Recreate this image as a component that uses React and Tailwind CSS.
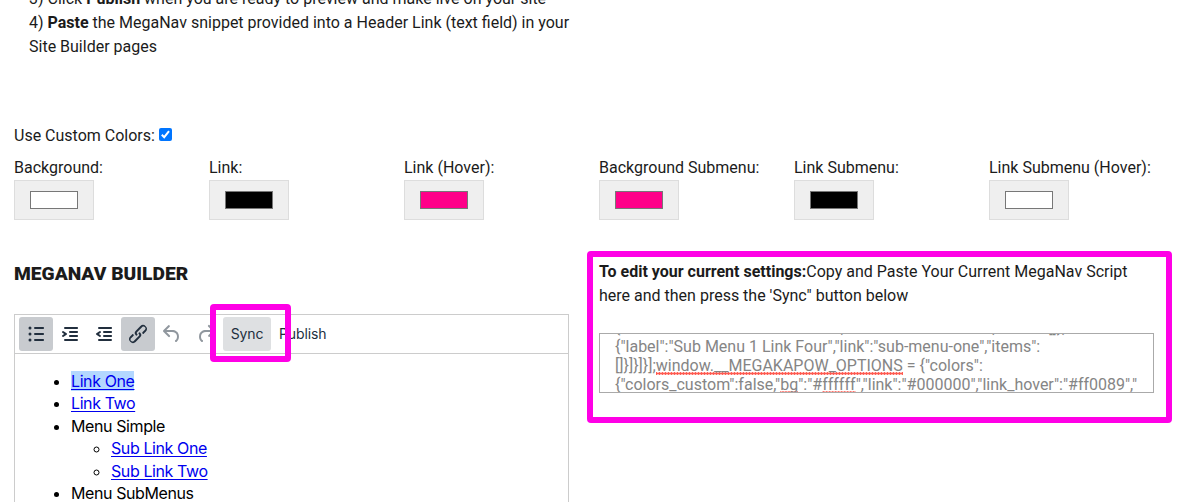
const swatches = [
  { label: 'Background:', fill: 'bg-white' },
  { label: 'Link:', fill: 'bg-black' },
  { label: 'Link (Hover):', fill: 'bg-[#ff0089]' },
  { label: 'Background Submenu:', fill: 'bg-[#ff0089]' },
  { label: 'Link Submenu:', fill: 'bg-black' },
  { label: 'Link Submenu (Hover):', fill: 'bg-white' },
];

const icons = {
  list: 'M11 5h8c.6 0 1 .4 1 1s-.4 1-1 1h-8a1 1 0 0 1 0-2Zm0 6h8c.6 0 1 .4 1 1s-.4 1-1 1h-8a1 1 0 0 1 0-2Zm0 6h8c.6 0 1 .4 1 1s-.4 1-1 1h-8a1 1 0 0 1 0-2ZM6 4.5a1.5 1.5 0 1 1 0 3 1.5 1.5 0 0 1 0-3Zm0 6a1.5 1.5 0 1 1 0 3 1.5 1.5 0 0 1 0-3Zm0 6a1.5 1.5 0 1 1 0 3 1.5 1.5 0 0 1 0-3Z',
  indent: 'M7 5h12c.6 0 1 .4 1 1s-.4 1-1 1H7a1 1 0 1 1 0-2Zm5 4h7c.6 0 1 .4 1 1s-.4 1-1 1h-7a1 1 0 0 1 0-2Zm0 4h7c.6 0 1 .4 1 1s-.4 1-1 1h-7a1 1 0 0 1 0-2Zm-5 4h12a1 1 0 0 1 0 2H7a1 1 0 0 1 0-2Zm-2.6-3.8L6.2 12l-1.8-1.2a1 1 0 0 1 1.2-1.6l3 2a1 1 0 0 1 0 1.6l-3 2a1 1 0 1 1-1.2-1.6Z',
  outdent: 'M7 5h12c.6 0 1 .4 1 1s-.4 1-1 1H7a1 1 0 1 1 0-2Zm5 4h7c.6 0 1 .4 1 1s-.4 1-1 1h-7a1 1 0 0 1 0-2Zm0 4h7c.6 0 1 .4 1 1s-.4 1-1 1h-7a1 1 0 0 1 0-2Zm-5 4h12a1 1 0 0 1 0 2H7a1 1 0 0 1 0-2Zm1.6-3.8a1 1 0 0 1-1.2 1.6l-3-2a1 1 0 0 1 0-1.6l3-2a1 1 0 0 1 1.2 1.6L6.8 12l1.8 1.2Z',
  link: 'M6.2 12.3a1 1 0 0 1 1.4 1.4l-2 2a2 2 0 1 0 2.6 2.8l4.8-4.8a1 1 0 0 0 0-1.4 1 1 0 1 1 1.4-1.3 2.9 2.9 0 0 1 0 4L9.6 20a3.9 3.9 0 0 1-5.5-5.5l2-2Zm11.6-.6a1 1 0 0 1-1.4-1.4l2-2a2 2 0 1 0-2.6-2.8L11 10.3a1 1 0 0 0 0 1.4A1 1 0 1 1 9.6 13a2.9 2.9 0 0 1 0-4L14.4 4a3.9 3.9 0 0 1 5.5 5.5l-2 2Z',
  undo: 'M6.4 8H12c3.7 0 6.2 2 6.8 5.1.6 2.7-.4 5.6-2.3 6.8a1 1 0 0 1-1-1.8c1.1-.6 1.8-2.7 1.4-4.6-.5-2.1-2.1-3.5-4.9-3.5H6.4l3.3 3.3a1 1 0 1 1-1.4 1.4l-5-5a1 1 0 0 1 0-1.4l5-5a1 1 0 0 1 1.4 1.4L6.4 8Z',
  redo: 'M17.6 10H12c-2.8 0-4.4 1.4-4.9 3.5-.4 2 .3 4 1.4 4.6a1 1 0 1 1-1 1.8c-2-1.2-2.9-4.1-2.3-6.8.6-3 3-5.1 6.8-5.1h5.6l-3.3-3.3a1 1 0 1 1 1.4-1.4l5 5a1 1 0 0 1 0 1.4l-5 5a1 1 0 0 1-1.4-1.4l3.3-3.3Z',
};

function ToolButton({ name, active, disabled }) {
  return (
    <button
      aria-label={name}
      className={`flex size-[34px] items-center justify-center rounded-[3px] ${active ? 'bg-[#c8cbcf]' : ''} ${disabled ? 'text-[#222f3e]/50' : 'text-[#222f3e]'}`}
    >
      <svg width="24" height="24" viewBox="0 0 24 24" fill="currentColor">
        <path fillRule="evenodd" d={icons[name]} />
      </svg>
    </button>
  );
}

function Misspelled({ children }) {
  return (
    <span className="bg-[radial-gradient(circle,#ff5a50_1.1px,transparent_1.6px)] bg-[length:3px_3px] bg-bottom bg-repeat-x">
      {children}
    </span>
  );
}

function EditorLink({ children, selected }) {
  return (
    <a className={`text-[#0000ee] underline decoration-1 underline-offset-2 ${selected ? 'bg-[#b3d7ff]' : ''}`}>{children}</a>
  );
}

export default function App() {
  return (
    <main className="h-[502px] overflow-hidden bg-white px-[14px] font-['Roboto',sans-serif] text-base leading-6 text-[#1b1b1b]">
      <div className="-mt-[13px] pl-[15px] whitespace-nowrap">
        <p>3) Click <b>Publish</b> when you are ready to preview and make live on your site</p>
        <p>4) <b>Paste</b> the MegaNav snippet provided into a Header Link (text field) in your</p>
        <p>Site Builder pages</p>
      </div>

      <label className="mt-[65px] flex items-center">
        Use Custom Colors:
        <span className="mb-[3px] ml-1 flex size-[13px] items-center justify-center rounded-[2px] bg-[#0075ff]">
          <svg width="13" height="13" viewBox="0 0 13 13" fill="none" stroke="white" strokeWidth="2">
            <path d="M2.8 6.8 5.2 9.2 10 3.2" />
          </svg>
        </span>
      </label>

      <div className="mt-2 grid w-[1170px] grid-cols-6 whitespace-nowrap">
        {swatches.map(({ label, fill }) => (
          <div key={label}>
            <div>{label}</div>
            <div className="flex h-10 w-20 items-center justify-center border border-[#ddd] bg-[#efefef]">
              <div className={`h-[18px] w-12 border border-[#777] ${fill}`} />
            </div>
          </div>
        ))}
      </div>

      <div className="flex gap-[30px] pt-[39px]">
        <section className="w-[555px] shrink-0">
          <h2 className="pt-[3px] text-[19.2px] leading-6 font-black">MEGANAV BUILDER</h2>
          <div className="mt-7 h-[230px] border border-[#ccc]">
            <div className="relative flex h-[39px] items-center border-b border-[#ccc] px-1 text-sm text-[#222f3e]">
              <ToolButton name="list" active />
              <ToolButton name="indent" />
              <ToolButton name="outdent" />
              <ToolButton name="link" active />
              <ToolButton name="undo" disabled />
              <ToolButton name="redo" disabled />
              <button className="h-[34px] w-12 rounded-[3px] bg-[#dee0e2] font-['Inter',sans-serif] tracking-[-0.1px]">Sync</button>
              <button className="h-[34px] px-2 font-['Inter',sans-serif] tracking-[-0.1px]">Publish</button>
              <div className="absolute -top-[11px] left-[195px] h-[58px] w-[81px] rounded-[4px] border-[6px] border-[#ff00e6]" />
            </div>
            <ul className="list-disc pt-4 pl-14 font-['Inter',sans-serif] leading-[22.4px] tracking-[-0.4px] text-black">
              <li><EditorLink selected>Link One</EditorLink></li>
              <li><EditorLink>Link Two</EditorLink></li>
              <li>
                Menu Simple
                <ul className="list-[circle] pl-10">
                  <li><EditorLink>Sub Link One</EditorLink></li>
                  <li><EditorLink>Sub Link Two</EditorLink></li>
                </ul>
              </li>
              <li>Menu SubMenus</li>
            </ul>
          </div>
        </section>

        <section className="relative w-[555px] shrink-0 pt-px whitespace-nowrap">
          <p><b>To edit your current settings:</b>Copy and Paste Your Current MegaNav Script</p>
          <p>here and then press the 'Sync" button below</p>
          <div className="mt-[25px] h-[60px] overflow-hidden border border-[#aaa] px-[15px] leading-[19px] text-[#858585]">
            <div className="-mt-[16px]">{'{"label":"Sub Menu 1 Link Three","link":"sub-menu-one","items":[]},'}</div>
            <div>{'{"label":"Sub Menu 1 Link Four","link":"sub-menu-one","items":'}</div>
            <div>{'[]}]}]}];'}<Misspelled>window.__MEGAKAPOW_OPTIONS</Misspelled>{' = {"colors":'}</div>
            <div>{'{"colors_custom":false,"'}<Misspelled>bg</Misspelled>{'":"#'}<Misspelled>ffffff</Misspelled>{'","link":"#000000","link_hover":"#ff0089","'}</div>
          </div>
          <div className="absolute -top-2 -left-3 h-[172px] w-[585px] rounded-[4px] border-[6px] border-[#ff00e6]" />
        </section>
      </div>
    </main>
  );
}
